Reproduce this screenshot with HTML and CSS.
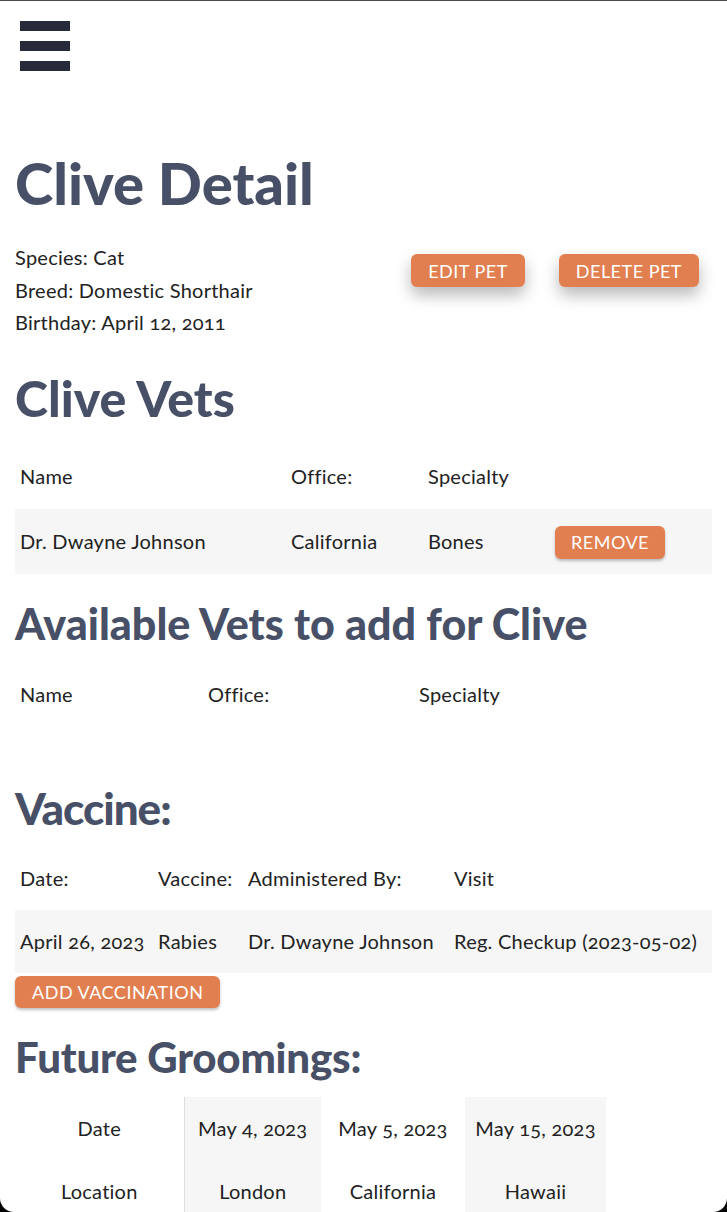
FILE: index.html
```html
<!DOCTYPE html>
<html lang="en">
<head>
<meta charset="utf-8">
<title>Clive Detail</title>
<link rel="stylesheet" href="styles.css">
</head>
<body>
<div class="frame"></div>
<nav class="nav">
  <button class="burger" aria-label="Menu"><span></span><span></span><span></span></button>
</nav>
<main class="page">
  <h1 class="title">Clive Detail</h1>
  <section class="info">
    <div class="facts">
      <p>Species: Cat</p>
      <p>Breed: Domestic Shorthair</p>
      <p>Birthday: April 12, 2011</p>
    </div>
    <div class="actions">
      <button class="btn btn-raised">EDIT PET</button>
      <button class="btn btn-raised">DELETE PET</button>
    </div>
  </section>

  <h2 class="heading h-vets">Clive Vets</h2>
  <table class="tbl tbl-vets">
    <thead><tr><th>Name</th><th>Office:</th><th>Specialty</th><th></th></tr></thead>
    <tbody><tr class="striped"><td>Dr. Dwayne Johnson</td><td>California</td><td>Bones</td><td><button class="btn btn-remove">REMOVE</button></td></tr></tbody>
  </table>

  <h2 class="heading h-avail">Available Vets to add for Clive</h2>
  <table class="tbl tbl-avail">
    <thead><tr><th>Name</th><th>Office:</th><th>Specialty</th></tr></thead>
  </table>

  <h2 class="heading h-vacc">Vaccine:</h2>
  <table class="tbl tbl-vacc">
    <thead><tr><th>Date:</th><th>Vaccine:</th><th>Administered By:</th><th>Visit</th></tr></thead>
    <tbody><tr class="striped"><td>April 26, 2023</td><td>Rabies</td><td>Dr. Dwayne Johnson</td><td>Reg. Checkup (2023-05-02)</td></tr></tbody>
  </table>
  <button class="btn btn-add">ADD VACCINATION</button>

  <h2 class="heading h-groom">Future Groomings:</h2>
  <table class="groom">
    <colgroup><col class="c1"><col class="c2"><col class="c3"><col class="c4"></colgroup>
    <tr><th>Date</th><td class="shade first">May 4, 2023</td><td>May 5, 2023</td><td class="shade">May 15, 2023</td></tr>
    <tr><th>Location</th><td class="shade first">London</td><td>California</td><td class="shade">Hawaii</td></tr>
  </table>
</main>
</body>
</html>
```

FILE: styles.css
```css
html, body {
  margin: 0;
  padding: 0;
  background: #fff;
}
body {
  font-family: "Lato", "Open Sans", sans-serif;
  font-size: 20px;
  letter-spacing: 0.25px;
  color: #222;
  border-top: 1px solid #4a4a4a;
  font-variant-numeric: oldstyle-nums;
}
.frame {
  position: fixed;
  inset: 0;
  border-radius: 0 0 14px 14px;
  box-shadow: 0 0 0 40px #000;
  pointer-events: none;
  z-index: 10;
}
.nav {
  padding: 20px 20px 0;
  height: 70px;
}
.burger {
  display: flex;
  flex-direction: column;
  gap: 10px;
  padding: 0;
  border: 0;
  background: none;
}
.burger span {
  display: block;
  width: 50px;
  height: 10px;
  background: #272a3a;
}
.page {
  padding: 0 15px;
}
.title, .heading {
  font-family: "Lato", sans-serif;
  font-weight: 900;
  color: #475067;
  margin: 0;
  line-height: 1;
  letter-spacing: 0;
}
.title {
  font-size: 58px;
  margin-top: 63px;
}
.info {
  display: flex;
  margin-top: 29px;
}
.facts {
  flex: 1;
}
.facts p {
  margin: 0;
  line-height: 32.5px;
}
.actions {
  display: flex;
  gap: 34px;
  padding: 13px 13px 0 0;
  align-items: flex-start;
}
.btn {
  font-family: "Lato", sans-serif;
  font-size: 18px;
  letter-spacing: 0.5px;
  color: #fff;
  background: #e27f50;
  border: 0;
  border-radius: 6px;
  height: 33px;
  padding: 0 17px;
  box-shadow: 0 2px 3px rgba(0,0,0,0.25);
}
.btn-raised {
  box-shadow: 0 8px 16px rgba(0,0,0,0.28);
}
.btn-remove {
  padding: 0 16px;
  margin-top: 2px;
}
.h-vets { font-size: 50px; margin-top: 34px; }
.h-avail { font-size: 43px; margin-top: 28px; }
.h-vacc { font-size: 44px; letter-spacing: -1px; margin-top: 59px; }
.h-groom { font-size: 42px; letter-spacing: -0.2px; margin-top: 28px; }
.tbl {
  width: 100%;
  border-collapse: collapse;
}
.tbl th, .tbl td {
  font-weight: 400;
  text-align: left;
  padding: 0 5px;
  height: 65px;
  white-space: nowrap;
}
.tbl .striped td {
  background: #f6f6f6;
}
.tbl-vets { margin-top: 21px; }
.tbl-avail { margin-top: 17px; }
.tbl-vacc { margin-top: 16px; }
.tbl-vacc th { height: 64px; }
.tbl-vacc td { height: 63px; }
.tbl-vets th:nth-child(1) { width: 261px; }
.tbl-vets th:nth-child(2) { width: 127px; }
.tbl-vets th:nth-child(3) { width: 117px; }
.tbl-avail th:nth-child(1) { width: 178px; }
.tbl-avail th:nth-child(2) { width: 201px; }
.tbl-vacc th:nth-child(1) { width: 128px; }
.tbl-vacc th:nth-child(2) { width: 80px; }
.tbl-vacc th:nth-child(3) { width: 196px; }
.btn-add {
  margin-top: 3px;
  display: block;
  height: 32px;
}
.groom {
  border-collapse: collapse;
  table-layout: fixed;
  margin-top: 19px;
}
.groom .c1 { width: 169px; }
.groom .c2 { width: 137px; }
.groom .c3 { width: 144px; }
.groom .c4 { width: 141px; }
.groom th, .groom td {
  font-weight: 400;
  text-align: center;
  height: 63px;
  padding: 0;
  white-space: nowrap;
}
.groom .shade { background: #f6f6f6; }
.groom .first { border-left: 1px solid #ddd; }
```
